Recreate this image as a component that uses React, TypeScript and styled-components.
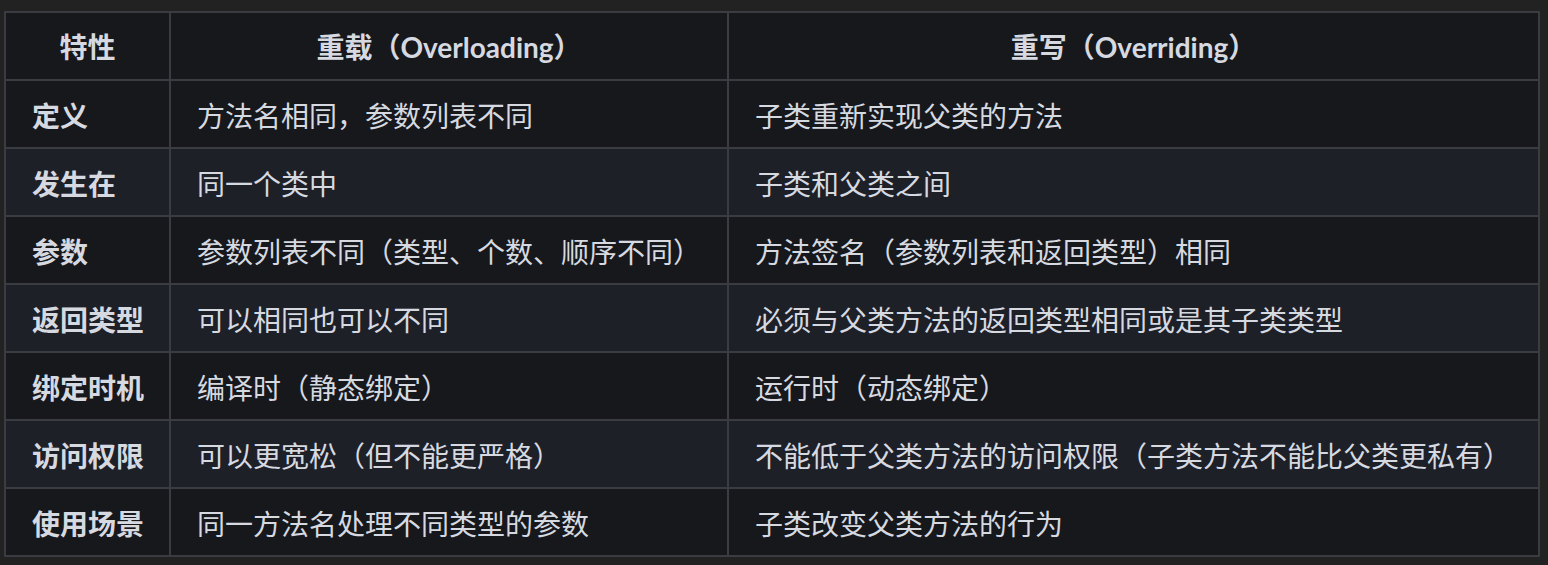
import React from "react";
import styled, { createGlobalStyle } from "styled-components";

const Global = createGlobalStyle`
  html, body { margin: 0; padding: 0; background: #222222; }
  body { font-family: "Noto Sans", "Noto Sans CJK SC", sans-serif; }
`;

const Page = styled.div`
  padding: 11px 10px 8px 4px;
  background: #222222;
`;

const Table = styled.table`
  border-collapse: collapse;
  width: 1534px;
  table-layout: fixed;
  background: #17181c;
  color: #d6dae0;
  font-family: "Lato", "Noto Sans CJK SC", sans-serif;
  font-size: 28px;
  border: 2px solid #3a3c42;
`;

const Row = styled.tr<{ $alt?: boolean }>`
  background: ${(p) => (p.$alt ? "#1e2028" : "#17181c")};
`;

const Th = styled.th`
  height: 68px;
  box-sizing: border-box;
  padding: 4px 26px 0;
  border: 2px solid #3a3c42;
  font-weight: 700;
  text-align: center;
  line-height: 1.4;
`;

const Td = styled.td<{ $bold?: boolean }>`
  height: 68px;
  box-sizing: border-box;
  padding: 5px 26px 0;
  border: 2px solid #3a3c42;
  font-weight: ${(p) => (p.$bold ? 700 : 400)};
  text-align: left;
  line-height: 1.4;
  white-space: nowrap;
`;

const rows: [string, string, string][] = [
  ["定义", "方法名相同，参数列表不同", "子类重新实现父类的方法"],
  ["发生在", "同一个类中", "子类和父类之间"],
  ["参数", "参数列表不同（类型、个数、顺序不同）", "方法签名（参数列表和返回类型）相同"],
  ["返回类型", "可以相同也可以不同", "必须与父类方法的返回类型相同或是其子类类型"],
  ["绑定时机", "编译时（静态绑定）", "运行时（动态绑定）"],
  ["访问权限", "可以更宽松（但不能更严格）", "不能低于父类方法的访问权限（子类方法不能比父类更私有）"],
  ["使用场景", "同一方法名处理不同类型的参数", "子类改变父类方法的行为"],
];

export default function App() {
  return (
    <Page>
      <Global />
      <Table>
        <colgroup>
          <col style={{ width: 165 }} />
          <col style={{ width: 558 }} />
          <col style={{ width: 811 }} />
        </colgroup>
        <thead>
          <Row>
            <Th>特性</Th>
            <Th>重载（Overloading）</Th>
            <Th>重写（Overriding）</Th>
          </Row>
        </thead>
        <tbody>
          {rows.map((r, i) => (
            <Row key={r[0]} $alt={i % 2 === 1}>
              <Td $bold>{r[0]}</Td>
              <Td>{r[1]}</Td>
              <Td>{r[2]}</Td>
            </Row>
          ))}
        </tbody>
      </Table>
    </Page>
  );
}
